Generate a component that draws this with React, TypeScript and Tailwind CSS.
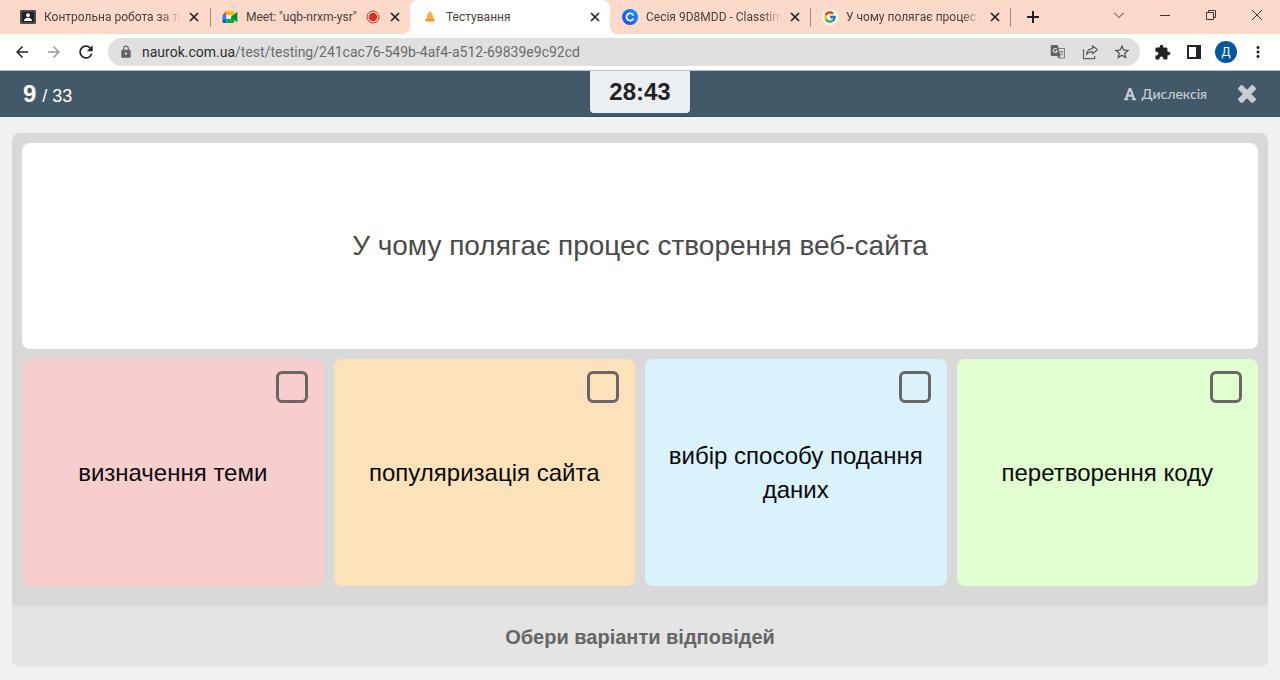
import type { ReactNode } from 'react';
import { FaFont } from 'react-icons/fa';
import { FcGoogle } from 'react-icons/fc';
import {
  MdArrowBack,
  MdArrowForward,
  MdExtension,
  MdLock,
  MdMoreVert,
  MdRefresh,
  MdStarBorder,
} from 'react-icons/md';

type Tab = {
  title: string;
  icon: ReactNode;
  active?: boolean;
  recording?: boolean;
  faded?: boolean;
  divider?: boolean;
};

const ClassroomIcon = () => (
  <svg viewBox="0 0 16 16" className="size-4">
    <rect width="16" height="14" y="1" rx="1" fill="#4a4e52" />
    <rect x="2" y="3" width="12" height="10" fill="#1f2327" />
    <circle cx="8" cy="6.2" r="1.900" fill="#fff" />
    <path d="M4 12c0-2.200 2-3.200 4-3.200s4 1 4 3.200z" fill="#fff" />
  </svg>
);

const MeetIcon = () => (
  <svg viewBox="0 0 16 16" className="size-4">
    <path d="M4.500 2v4H0.500z" fill="#ea4335" />
    <path d="M4.500 2H11a1.200 1.200 0 0 1 1.200 1.200V7L9 8V6H4.500z" fill="#fbbc04" />
    <path d="M0.500 6h4v4h-4z" fill="#2684fc" />
    <path d="M0.500 10h4v4H1.700A1.200 1.200 0 0 1 .5 12.800z" fill="#0066da" />
    <path d="M4.500 10H9V8l3.200-1v5.800A1.200 1.200 0 0 1 11 14H4.500z" fill="#00ac47" />
    <path d="M4.500 6H9v4H4.500z" fill="#fff" />
    <path d="M9 8l5.200-4.600c.5-.4 1.200-.1 1.200.5v8.200c0 .6-.7.9-1.200.5z" fill="#00932d" />
  </svg>
);

const BellIcon = () => (
  <svg viewBox="0 0 16 16" className="size-4">
    <path d="M8 2.500c.9 0 1.200.6 1.200 1.300C10.700 4.600 11 7 11.200 9H4.800C5 7 5.300 4.600 6.800 3.800 6.800 3.100 7.100 2.500 8 2.500z" fill="#fbb03b" />
    <path d="M4.200 9.300h7.600l1.200 3H3z" fill="#f7931e" />
    <path d="M6.500 12.200h3c0 .6-.7 1-1.500 1s-1.500-.4-1.500-1z" fill="#fbb03b" />
  </svg>
);

const ClasstimeIcon = () => (
  <svg viewBox="0 0 16 16" className="size-4">
    <defs>
      <linearGradient id="classtime" x1="0" y1="1" x2="1" y2="0">
        <stop offset="0" stopColor="#1f45ff" />
        <stop offset="1" stopColor="#0b9cf5" />
      </linearGradient>
    </defs>
    <circle cx="8" cy="8" r="8" fill="url(#classtime)" />
    <path d="M11 10.100A3.600 3.600 0 1 1 11 5.900" fill="none" stroke="#fff" strokeWidth="1.800" strokeLinecap="round" />
  </svg>
);

const GoogleIcon = () => (
  <span className="flex size-4 items-center justify-center rounded-full bg-white">
    <FcGoogle className="size-[14px]" />
  </span>
);

const Cross = () => (
  <svg viewBox="0 0 10 10" className="size-[10px]" stroke="#222" strokeWidth="1.700">
    <path d="M1 1l8 8M9 1l-8 8" />
  </svg>
);

const TranslateIcon = () => (
  <svg viewBox="0 0 16 16" className="size-4" fill="none">
    <path d="M7 4.500h7.500v9.500H8.500" stroke="#7b7f83" />
    <path d="M1.500 1h6.300L10.500 12H1.500a.8.800 0 0 1-.8-.8V1.800a.8.800 0 0 1 .8-.8z" fill="#5f6368" />
    <path d="M7 5.300A2 2 0 1 0 7.300 7H5.600" stroke="#e0e0e0" strokeWidth="1.100" />
    <path d="M9.500 7.500h4M11.500 6.500v1M12.800 7.500c-.4 1.600-1.300 2.800-2.300 3.600M10.500 8.500c.5 1.200 1.500 2.200 2.700 2.900" stroke="#7b7f83" strokeWidth=".8" />
    <path d="M7.500 12h3l-2.300 2.500z" fill="#5f6368" />
  </svg>
);

const ShareIcon = () => (
  <svg viewBox="0 0 18 18" className="size-[18px]" fill="none" stroke="#5f6368" strokeWidth="1.200" strokeLinejoin="round">
    <path d="M2.500 6v9.700h11.200v-2.700" />
    <path d="M11.500 2.800l5 4-5 4V8.700c-3 0-4.800 1-6 3 .3-3.600 2.500-5.900 6-6.100z" />
  </svg>
);

const tabs: Tab[] = [
  { title: 'Контрольна робота за те', icon: <ClassroomIcon />, faded: true, divider: true },
  { title: 'Meet: "uqb-nrxm-ysr"', icon: <MeetIcon />, recording: true },
  { title: 'Тестування', icon: <BellIcon />, active: true },
  { title: 'Сесія 9D8MDD - Classtim', icon: <ClasstimeIcon />, faded: true, divider: true },
  { title: 'У чому полягає процес с', icon: <GoogleIcon />, faded: true, divider: true },
];

const answers = [
  { text: 'визначення теми', color: 'bg-[#f7cdcd]' },
  { text: 'популяризація сайта', color: 'bg-[#fce2ba]' },
  { text: 'вибір способу подання даних', color: 'bg-[#daf2fc]' },
  { text: 'перетворення коду', color: 'bg-[#e1fed0]' },
];

function TabItem({ tab }: { tab: Tab }) {
  return (
    <div
      className={
        tab.active
          ? 'relative flex h-[34px] w-[200px] min-w-0 items-center rounded-t-lg bg-white pr-[10px] pl-3'
          : 'relative flex h-[34px] w-[200px] min-w-0 items-center pr-[10px] pl-3 first:pr-[11px] first:pl-[10px]'
      }
    >
      {tab.active && (
        <>
          <span className="absolute bottom-0 -left-2 size-2 bg-[radial-gradient(circle_at_0_0,transparent_8px,white_8px)]" />
          <span className="absolute -right-2 bottom-0 size-2 bg-[radial-gradient(circle_at_100%_0,transparent_8px,white_8px)]" />
        </>
      )}
      <span className="shrink-0">{tab.icon}</span>
      <span
        className={
          tab.faded
            ? 'ml-2 min-w-0 flex-1 overflow-hidden text-xs whitespace-nowrap text-[#4a3f3b] [mask-image:linear-gradient(to_right,black_calc(100%-20px),transparent)]'
            : 'ml-2 min-w-0 flex-1 text-xs whitespace-nowrap text-[#4a3f3b]'
        }
      >
        {tab.title}
      </span>
      {tab.recording && (
        <svg viewBox="0 0 14 14" className="size-[14px] shrink-0" aria-label="Запис">
          <circle cx="7" cy="7" r="6" fill="none" stroke="#d93025" strokeWidth="1" />
          <circle cx="7" cy="7" r="4.300" fill="#d93025" />
        </svg>
      )}
      <button type="button" aria-label="Закрити вкладку" className={tab.recording ? 'ml-[10px] shrink-0' : 'ml-2 shrink-0'}>
        <Cross />
      </button>
      {tab.divider && <span className="absolute top-2 -right-px h-[19px] w-px bg-[#a08c84]" />}
    </div>
  );
}

function IconButton({ label, children }: { label: string; children: ReactNode }) {
  return (
    <button type="button" aria-label={label} className="flex h-7 w-8 items-center justify-center">
      {children}
    </button>
  );
}

function Browser() {
  return (
    <div className="font-['Roboto',sans-serif]">
      <div className="flex h-[34px] items-center bg-[#fcd9c8] pl-[10px]">
        {tabs.map((tab) => (
          <TabItem key={tab.title} tab={tab} />
        ))}
        <button type="button" aria-label="Нова вкладка" className="ml-[17px] shrink-0">
          <svg viewBox="0 0 12 12" className="size-3" stroke="#222" strokeWidth="2">
            <path d="M6 0v12M0 6h12" />
          </svg>
        </button>
        <div className="ml-auto flex shrink-0 items-center gap-9 pr-[18px] pb-[5px]">
          <button type="button" aria-label="Пошук вкладок">
            <svg viewBox="0 0 10 10" className="size-[10px]" fill="none" stroke="#40342f">
              <path d="M0 2.500l5 5 5-5" />
            </svg>
          </button>
          <button type="button" aria-label="Згорнути">
            <svg viewBox="0 0 10 10" className="size-[10px]" fill="none" stroke="#40342f">
              <path d="M0 5.500h10" />
            </svg>
          </button>
          <button type="button" aria-label="Відновити">
            <svg viewBox="0 0 10 10" className="size-[10px]" fill="none" stroke="#40342f">
              <path d="M.5 2.500h7v7h-7zM2.500 2.500v-2h7v7h-2" />
            </svg>
          </button>
          <button type="button" aria-label="Закрити">
            <svg viewBox="0 0 10 10" className="size-[10px]" fill="none" stroke="#40342f">
              <path d="M0 0l10 10M10 0L0 10" />
            </svg>
          </button>
        </div>
      </div>
      <div className="flex h-[37px] items-center border-b border-[#b9bfc2] bg-white px-[6px]">
        <div className="flex items-center">
          <IconButton label="Назад">
            <MdArrowBack className="size-[18px] text-[#222]" />
          </IconButton>
          <IconButton label="Вперед">
            <MdArrowForward className="size-[18px] text-[#9a9a9a]" />
          </IconButton>
          <IconButton label="Оновити">
            <MdRefresh className="size-5 text-[#222]" />
          </IconButton>
        </div>
        <div className="mx-[6px] flex h-7 min-w-0 flex-1 items-center rounded-full bg-[#e0e0e0] pr-[2px] pl-[11px]">
          <MdLock className="size-[14px] shrink-0 text-[#5f6368]" />
          <div className="ml-[9px] min-w-0 flex-1 truncate text-sm text-[#6b6b6b]">
            <span className="text-[#2d2d2d]">naurok.com.ua</span>/test/testing/241cac76-549b-4af4-a512-69839e9c92cd
          </div>
          <div className="flex items-center">
            <IconButton label="Перекласти">
              <TranslateIcon />
            </IconButton>
            <IconButton label="Поділитися">
              <ShareIcon />
            </IconButton>
            <IconButton label="Додати закладку">
              <MdStarBorder className="size-[18px] text-[#4c4f52]" />
            </IconButton>
          </div>
        </div>
        <div className="flex items-center">
          <IconButton label="Розширення">
            <MdExtension className="size-[17px] text-[#222]" />
          </IconButton>
          <IconButton label="Бічна панель">
            <svg viewBox="0 0 16 16" className="size-4">
              <path d="M2 2h12v12H2z" fill="none" stroke="#222" strokeWidth="2" />
              <path d="M10 2h4v12h-4z" fill="#222" />
            </svg>
          </IconButton>
          <IconButton label="Профіль">
            <span className="flex size-[22px] items-center justify-center rounded-full bg-[#04569f] text-xs text-white">Д</span>
          </IconButton>
          <IconButton label="Меню">
            <MdMoreVert className="size-[18px] text-[#222]" />
          </IconButton>
        </div>
      </div>
    </div>
  );
}

export default function App() {
  return (
    <div className="flex min-h-screen flex-col bg-[#f1f1f1] font-['Liberation_Sans',Arial,sans-serif]">
      <Browser />
      <header className="grid h-[46px] grid-cols-[1fr_100px_1fr] items-start border-b border-[#384d5d] bg-[#42596a] text-white">
        <div className="flex h-[46px] items-baseline gap-[6px] pt-[7px] pl-[23px] text-lg">
          <strong className="text-2xl">9</strong>
          <span>/ 33</span>
        </div>
        <div className="flex h-[42px] items-center justify-center rounded-b bg-[#eceff2] text-2xl font-bold text-[#222]">28:43</div>
        <div className="flex h-[46px] items-center justify-end gap-[31px] pr-6 text-[#c6ced5]">
          <button type="button" className="flex items-center gap-1">
            <FaFont className="size-[14px]" />
            <span className="font-['Lato',sans-serif] text-sm font-medium">Дислексія</span>
          </button>
          <button type="button" aria-label="Завершити тест">
            <svg viewBox="-9 -9 18 18" className="size-[18px]" fill="currentColor">
              <g transform="rotate(45)">
                <rect x="-10.500" y="-3" width="21" height="6" rx="1.500" />
                <rect x="-3" y="-10.500" width="6" height="21" rx="1.500" />
              </g>
            </svg>
          </button>
        </div>
      </header>
      <main className="flex flex-1 flex-col px-3 pt-4 pb-[13px]">
        <form className="flex flex-1 flex-col overflow-hidden rounded-lg bg-[#d9d9d9]">
          <fieldset className="flex flex-1 flex-col gap-[10px] px-[10px] pt-[10px] pb-5">
            <h1 className="flex min-h-[206px] flex-1 items-center justify-center rounded-lg bg-white px-6 text-center text-[28px] leading-10 text-[#4a4a4a]">
              У чому полягає процес створення веб-сайта
            </h1>
            <div className="grid min-h-[227px] grid-cols-4 gap-[10px]">
              {answers.map((answer) => (
                <label key={answer.text} className={`grid rounded-lg ${answer.color}`}>
                  <span className="col-start-1 row-start-1 self-center px-4 text-center text-2xl leading-[34px] text-[#0a0a0a]">
                    {answer.text}
                  </span>
                  <input
                    type="checkbox"
                    className="col-start-1 row-start-1 mt-3 mr-4 size-8 appearance-none self-start justify-self-end rounded-md border-3 border-[#6b6666] checked:bg-[#6b6666]"
                  />
                </label>
              ))}
            </div>
          </fieldset>
          <button type="submit" className="h-[61px] bg-[#e4e4e4] text-xl font-bold text-[#666]">
            Обери варіанти відповідей
          </button>
        </form>
      </main>
    </div>
  );
}
